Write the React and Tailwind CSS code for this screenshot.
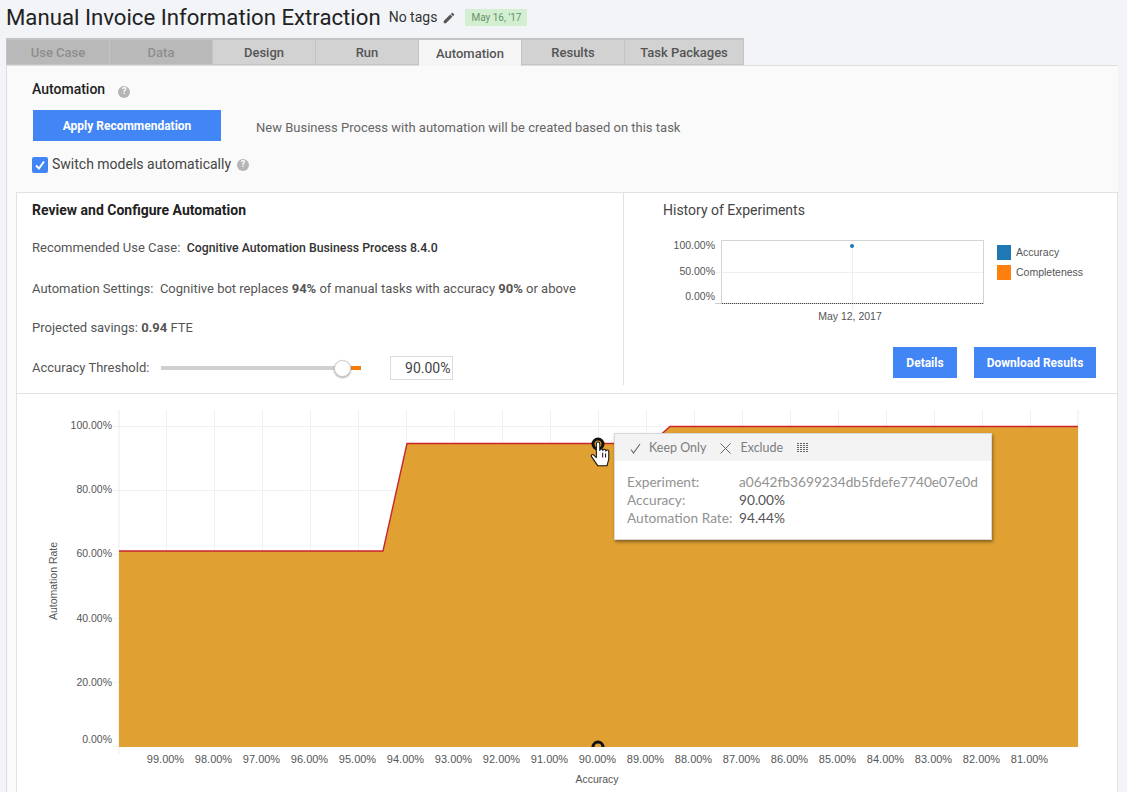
import React from "react";

const tabs = [
  { label: "Use Case", state: "off", w: "w-[104px] border-l" },
  { label: "Data", state: "off", w: "w-[103px]" },
  { label: "Design", state: "on", w: "w-[103px]" },
  { label: "Run", state: "on", w: "w-[103px]" },
  { label: "Automation", state: "active", w: "w-[103px]" },
  { label: "Results", state: "on", w: "w-[103px]" },
  { label: "Task Packages", state: "on", w: "w-[119px]" },
];

const tabStyles = {
  off: "bg-[#b9b9b9] text-[#8e8e8e] h-[27px]",
  on: "bg-[#d2d2d2] text-[#555] h-[27px]",
  active: "bg-[#f5f5f5] text-[#555] h-[28px] border-b-0 pb-[1px]",
};

const xLabels = ["99.00%", "98.00%", "97.00%", "96.00%", "95.00%", "94.00%", "93.00%", "92.00%", "91.00%", "90.00%", "89.00%", "88.00%", "87.00%", "86.00%", "85.00%", "84.00%", "83.00%", "82.00%", "81.00%"];
const yLabels = [
  ["100.00%", 33, 35],
  ["80.00%", 97, 99],
  ["60.00%", 161, 163],
  ["40.00%", 225, 228],
  ["20.00%", 289, 292],
  ["0.00%", 353, 349],
];

const Help = ({ className = "" }) => (
  <span className={`inline-flex w-3 h-3 rounded-full bg-[#b5b5b5] text-white text-[9px] font-bold items-center justify-center leading-none ${className}`}>?</span>
);

const BlueButton = ({ children, className = "" }) => (
  <button className={`bg-[#4285f4] text-white text-[12px] font-bold h-[31px] flex items-center justify-center ${className}`}>{children}</button>
);

const MainChart = () => (
  <svg width="1101" height="398" viewBox="0 0 1101 398" className="block font-['Liberation_Sans',sans-serif]">
    {/* origin of this drawing is page x=17, y=394 */}
    {yLabels.map(([, y]) => (
      <line key={y} x1="96" x2="1061" y1={y - 0.5} y2={y - 0.5} stroke="#f0f0f0" />
    ))}
    {xLabels.map((_, i) => (
      <line key={i} x1={149.5 + i * 48} x2={149.5 + i * 48} y1="16" y2="353" stroke="#f0f0f0" />
    ))}
    <line x1="102" x2="102" y1="16" y2="360" stroke="#ececec" />
    <line x1="1061" x2="1061" y1="16" y2="353" stroke="#ececec" />
    <path d="M102 157 H366 L390 49.5 H634 L653 32.5 H1061 V353 H102 Z" fill="#e0a032" />
    <path d="M102 157 H366 L390 49.5 H634 L653 32.5 H1061" fill="none" stroke="#c9252d" strokeWidth="1.4" />
    {yLabels.map(([label, , ty]) => (
      <text key={label} x="95" y={ty} textAnchor="end" fontSize="10.5" fill="#555">{label}</text>
    ))}
    {xLabels.map((label, i) => (
      <text key={label} x={148.5 + i * 48} y="369" textAnchor="middle" fontSize="11" fill="#555">{label}</text>
    ))}
    <text x="580" y="389" textAnchor="middle" fontSize="10.5" fill="#555">Accuracy</text>
    <text transform="translate(40 187) rotate(-90)" textAnchor="middle" fontSize="10.5" fill="#555">Automation Rate</text>
    <circle cx="581" cy="50" r="5" fill="#e0a032" stroke="#111" strokeWidth="3" />
    <path d="M574.5 353 A6.5 6.5 0 0 1 587.5 353 H584.5 A3.5 3.5 0 0 0 577.5 353 Z" fill="#111" />
    {/* hand cursor */}
    <g transform="translate(580.5 48.5) scale(1.15) translate(-581 -50)">
      <path d="M580 51 a1.5 1.5 0 0 1 3 0 v6 a1.3 1.3 0 0 1 2.6 0 a1.3 1.3 0 0 1 2.6 .5 a1.3 1.3 0 0 1 2.6 .8 v6 l-1.5 6 h-8 l-5.5 -8 c-.8 -1.6 1 -2.4 2.2 -1.2 l2 2 Z" fill="#fff" stroke="#111" strokeWidth="0.9" strokeLinejoin="round" />
      <path d="M585.5 59 v4 M588 59.5 v3.5" stroke="#111" strokeWidth="0.9" fill="none" />
    </g>
  </svg>
);

const Tooltip = () => (
  <div className="absolute left-[597px] top-[39px] w-[378px] h-[107px] bg-white border border-[#d8d8d8] shadow-[1px_2px_3px_rgba(0,0,0,0.4)] font-['Lato',sans-serif] text-[13.7px]">
    <div className="h-[27px] bg-[#f3f3f3] flex items-center pl-[15px] pt-[1px] text-[#7d7d7d] text-[12.5px]">
      <svg width="11" height="11" viewBox="0 0 11 11" fill="none" stroke="#666" strokeWidth="1.1"><path d="M1 6.5 L3.5 10 L10 1" /></svg>
      <span className="ml-[8px]">Keep Only</span>
      <svg width="11" height="11" viewBox="0 0 11 11" fill="none" stroke="#666" strokeWidth="1" className="ml-[14px]"><path d="M.5 .5 L10.5 10.5 M10.5 .5 L.5 10.5" /></svg>
      <span className="ml-[9px]">Exclude</span>
      <svg width="12" height="9" viewBox="0 0 12 9" className="ml-[14px] mb-[2px]" stroke="#666" strokeWidth="1"><path d="M0 .5 H12 M0 2.5 H12 M0 4.5 H12 M0 6.5 H12 M0 8.5 H12" strokeDasharray="2 1" /></svg>
    </div>
    <div className="pt-[12px] pl-[12px] leading-[18px] text-[#929292] grid grid-cols-[112px_auto]">
      <span>Experiment:</span>
      <span>a0642fb3699234db5fdefe7740e07e0d</span>
      <span>Accuracy:</span>
      <span className="text-[#555]">90.00%</span>
      <span>Automation Rate:</span>
      <span className="text-[#555]">94.44%</span>
    </div>
  </div>
);

export default function App() {
  return (
    <div className="w-[1127px] h-[792px] overflow-hidden bg-[#f2f4f8] font-['Roboto',sans-serif] pl-[6px]">
      <div className="h-[38px] flex items-center pb-[3px]">
        <h1 className="text-[22.2px] leading-none text-[#222]">Manual Invoice Information Extraction</h1>
        <span className="ml-[8px] text-[14px] text-[#333]">No tags</span>
        <svg width="14" height="14" viewBox="0 0 24 24" fill="#555" className="ml-[5px]">
          <path d="M3 17.25V21h3.75L17.81 9.94l-3.75-3.75L3 17.25zM20.71 7.04a1 1 0 0 0 0-1.41l-2.34-2.34a1 1 0 0 0-1.41 0l-1.83 1.83 3.75 3.75 1.83-1.83z" />
        </svg>
        <span className="ml-[9px] h-[17px] w-[62px] bg-[#d2efd2] text-[#6b8f6b] text-[10px] flex items-center justify-center">May 16, '17</span>
      </div>

      <div className="flex items-start h-[27px] relative z-10">
        {tabs.map((t) => (
          <div key={t.label} className={`flex items-center justify-center pt-[2px] text-[13px] font-medium border-t-2 border-b border-r border-[#c4c4c4] ${t.w} ${tabStyles[t.state]}`}>
            {t.label}
          </div>
        ))}
      </div>

      <div className="w-[1112px] h-[727px] bg-[#fafafa] border-l border-t border-[#dedede] pl-[9px]">
        <div className="h-[126px] relative">
          <div className="flex items-center pt-[7px] pl-[16px] h-[32px] box-content">
            <span className="text-[14px] font-medium text-[#222]">Automation</span>
            <Help className="ml-[13px] mt-[5px]" />
          </div>
          <div className="flex items-center ml-[17px] mt-[5px]">
            <BlueButton className="w-[188px]">Apply Recommendation</BlueButton>
            <span className="ml-[35px] mt-[5px] text-[13px] text-[#666]">New Business Process with automation will be created based on this task</span>
          </div>
          <div className="flex items-center ml-[16px] mt-[13px]">
            <span className="w-4 h-4 rounded-[2px] bg-[#4285f4] flex items-center justify-center">
              <svg width="12" height="12" viewBox="0 0 12 12" fill="none" stroke="#fff" strokeWidth="2"><path d="M2 6.5 L5 9.5 L10 2.5" /></svg>
            </span>
            <span className="ml-[4px] text-[14px] text-[#444]">Switch models automatically</span>
            <Help className="ml-[6px]" />
          </div>
        </div>

        <div className="w-[1102px] h-[620px] bg-white border border-[#e2e2e2] relative">
          <div className="h-[201px] flex border-b border-[#e2e2e2]">
            <div className="w-[606px] pl-[15px] pt-[10px] text-[13px] text-[#555]">
              <div className="text-[14px] font-bold text-[#222] leading-[15px]">Review and Configure Automation</div>
              <div className="mt-[22px] leading-[15px]">Recommended Use Case:&nbsp; <span className="font-medium text-[12.3px] text-[#333]">Cognitive Automation Business Process 8.4.0</span></div>
              <div className="mt-[25px] leading-[15px]">Automation Settings:&nbsp; Cognitive bot replaces <b>94%</b> of manual tasks with accuracy <b>90%</b> or above</div>
              <div className="mt-[24px] leading-[15px]">Projected savings: <b>0.94</b> FTE</div>
              <div className="mt-[21px] flex items-center h-[24px]">
                <span>Accuracy Threshold:</span>
                <div className="ml-[12px] w-[200px] h-[17px] relative">
                  <div className="absolute left-0 top-[6px] w-[178px] h-[4px] bg-[#d0d0d0]" />
                  <div className="absolute left-[190px] top-[6px] w-[10px] h-[4px] bg-[#f57c00]" />
                  <div className="absolute left-[173px] top-0 w-[17px] h-[17px] rounded-full bg-white border border-[#ccc] shadow-[0_1px_2px_rgba(0,0,0,0.35)]" />
                </div>
                <div className="ml-[29px] w-[63px] h-[24px] border border-[#ddd] text-[14px] text-[#444] flex items-center justify-end pr-[2px]">90.00%</div>
              </div>
            </div>
            <div className="w-[1px] h-[192px] bg-[#e2e2e2]" />
            <div className="flex-1 pl-[39px] pt-[10px]">
              <div className="text-[14px] leading-[15px] text-[#444]">History of Experiments</div>
              <div className="flex mt-[22px]">
                <svg width="325" height="90" viewBox="0 0 325 90" className="block font-['Liberation_Sans',sans-serif]">
                  <rect x="58.5" y="0.5" width="262" height="63" fill="#fff" stroke="#d4d4d4" />
                  <line x1="52" x2="320" y1="32.5" y2="32.5" stroke="#eee" />
                  <line x1="189.5" x2="189.5" y1="1" y2="70" stroke="#eee" />
                  <line x1="52" x2="320" y1="63.5" y2="63.5" stroke="#ccc" />
                  <line x1="59" x2="320" y1="63.5" y2="63.5" stroke="#444" strokeDasharray="1 1" />
                  <circle cx="189" cy="6" r="2" fill="#1f77b4" />
                  <text x="52" y="9" textAnchor="end" fontSize="10.5" fill="#555">100.00%</text>
                  <text x="52" y="35" textAnchor="end" fontSize="10.5" fill="#555">50.00%</text>
                  <text x="52" y="60" textAnchor="end" fontSize="10.5" fill="#555">0.00%</text>
                  <text x="187" y="80" textAnchor="middle" fontSize="10.5" fill="#555">May 12, 2017</text>
                </svg>
                <div className="ml-[9px] mt-[5px] text-[10.5px] text-[#555] font-['Liberation_Sans',sans-serif]">
                  <div className="flex items-center h-[15px]"><span className="w-[14px] h-[15px] bg-[#1f77b4]" /><span className="ml-[5px]">Accuracy</span></div>
                  <div className="flex items-center h-[15px] mt-[5px]"><span className="w-[14px] h-[15px] bg-[#ff7f0e]" /><span className="ml-[5px]">Completeness</span></div>
                </div>
              </div>
              <div className="flex justify-end mt-[17px] mr-[21px] gap-[17px]">
                <BlueButton className="w-[64px]">Details</BlueButton>
                <BlueButton className="w-[122px]">Download Results</BlueButton>
              </div>
            </div>
          </div>
          <div className="relative">
            <MainChart />
            <Tooltip />
          </div>
        </div>
      </div>
    </div>
  );
}
